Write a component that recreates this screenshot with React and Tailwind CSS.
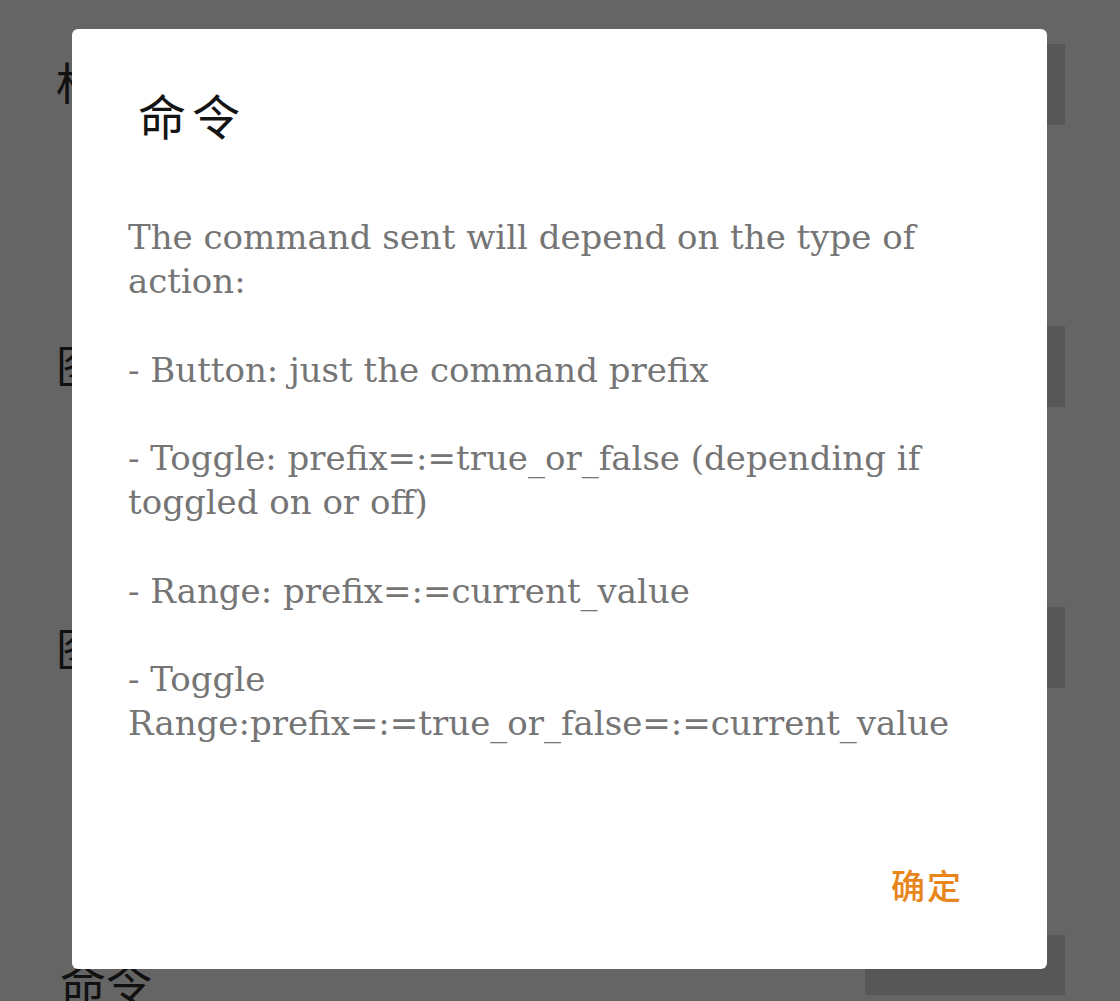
import React from "react";

export default function App() {
  const lines = [
    "The command sent will depend on the type of",
    "action:",
    "",
    "- Button: just the command prefix",
    "",
    "- Toggle: prefix=:=true_or_false (depending if",
    "toggled on or off)",
    "",
    "- Range: prefix=:=current_value",
    "",
    "- Toggle",
    "Range:prefix=:=true_or_false=:=current_value",
  ];
  return (
    <div className="relative w-[1120px] h-[1001px] overflow-hidden bg-[#656565]">
      {/* background page (dimmed) */}
      <div className="flex flex-col pl-[56px] pr-[55px] text-[#111] font-['Noto_Sans_CJK_SC',sans-serif] text-[46px] leading-none">
        <div className="flex justify-between items-start h-[282px] pt-[44px]">
          <span className="pt-[14px] w-[16px] overflow-hidden whitespace-nowrap">标签</span>
          <div className="w-[200px] h-[81px] bg-[#575757]" />
        </div>
        <div className="flex justify-between items-start h-[282px] pt-[44px]">
          <span className="pt-[14px] w-[16px] overflow-hidden whitespace-nowrap">图标</span>
          <div className="w-[200px] h-[81px] bg-[#575757]" />
        </div>
        <div className="flex justify-between items-start h-[364px] pt-[43px]">
          <span className="pt-[16px] w-[16px] overflow-hidden whitespace-nowrap">图片</span>
          <div className="w-[200px] h-[81px] bg-[#575757]" />
        </div>
        <div className="flex justify-between items-start pt-[0px]">
          <span className="pt-[30px] pl-[4px] whitespace-nowrap">命令</span>
          <div className="mt-[7px] w-[200px] h-[60px] bg-[#575757]" />
        </div>
      </div>

      {/* dialog */}
      <div className="absolute left-[72px] top-[29px] w-[975px] h-[940px] bg-white rounded-[6px] flex flex-col">
        <div className="pl-[66px] pt-[61px] text-[48px] leading-none text-[#141414] font-['Noto_Sans_CJK_SC',sans-serif] tracking-[6px]">
          命令
        </div>
        <div className="pl-[56px] pt-[77px] text-[#757575] font-['DejaVu_Serif',serif] text-[34px] leading-[44.2px]">
          {lines.map((l, i) => (
            <div key={i} className="whitespace-nowrap h-[44.2px]">
              {l}
            </div>
          ))}
        </div>
        <div className="mt-auto flex justify-end pr-[84px] pb-[67px]">
          <span className="text-[34px] leading-none text-[#e8861c] font-['Noto_Sans_CJK_SC',sans-serif] font-medium tracking-[2px]">
            确定
          </span>
        </div>
      </div>
    </div>
  );
}
